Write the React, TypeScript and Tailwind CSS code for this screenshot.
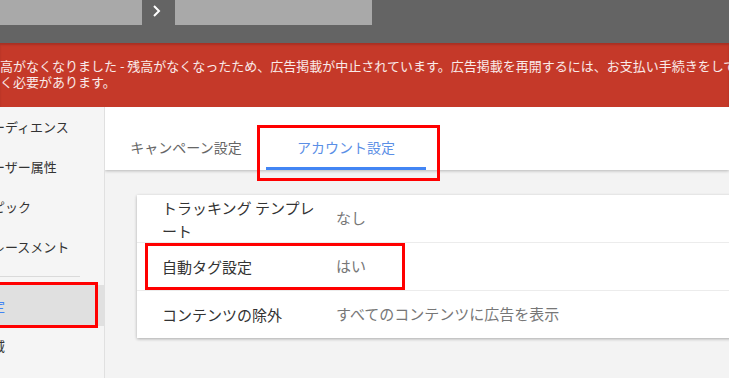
const navItems = ['オーディエンス', 'ユーザー属性', 'トピック', 'プレースメント']

const rows = [
  { label: 'トラッキング テンプレート', value: 'なし' },
  { label: '自動タグ設定', value: 'はい', marked: true },
  { label: 'コンテンツの除外', value: 'すべてのコンテンツに広告を表示' },
]

function TopBar() {
  return (
    <div className="h-[43px] bg-[#646464] flex items-start">
      <div className="w-[142px] h-[25px] bg-[#a9a9a9]" />
      <div className="w-[33px] h-[25px] pl-[10px] pt-[5px]">
        <svg width="10" height="12" viewBox="0 0 10 12" fill="none">
          <path d="M2 1l5 5-5 5" stroke="#fff" strokeWidth="2" />
        </svg>
      </div>
      <div className="w-[197px] h-[25px] bg-[#a9a9a9]" />
    </div>
  )
}

function Banner() {
  return (
    <div className="h-[64px] bg-[#c53929] shadow-[inset_0_2px_2px_rgba(0,0,0,0.15)] pt-[15px] overflow-hidden">
      <div className="ml-[-13px] text-[13px] leading-[16px] text-white/90 whitespace-nowrap">
        <div>残高がなくなりました - 残高がなくなったため、広告掲載が中止されています。広告掲載を再開するには、お支払い手続きをしていた</div>
        <div>だく必要があります。</div>
      </div>
    </div>
  )
}

function Sidebar() {
  return (
    <div className="w-[105px] shrink-0 bg-[#f5f5f5] border-r border-[#e0e0e0] text-[13px] text-[#333]">
      {navItems.map(n => (
        <div key={n} className="h-[40px] flex items-center whitespace-nowrap">
          <span className="ml-[-21px]">{n}</span>
        </div>
      ))}
      <div className="mt-[9px] h-px w-[80px] bg-[#dadada]" />
      <div className="relative mt-[8px] h-[41px] bg-[#e0e0e0] flex items-center text-[#4285f4]">
        <span className="ml-[-21px]">設定</span>
        <span className="absolute left-[-4px] right-[6px] top-[-3px] bottom-[-2px] border-[3px] border-[#ff0000]" />
      </div>
      <div className="h-[40px] flex items-center">
        <span className="ml-[-21px]">地域</span>
      </div>
    </div>
  )
}

function Tabs() {
  return (
    <div className="h-[63px] bg-white shadow-[0_1px_3px_rgba(0,0,0,0.25)] flex pl-px text-[14px]">
      <div className="w-[160px] flex justify-center pt-[30px] leading-[20px] text-[#666]">キャンペーン設定</div>
      <div className="relative w-[160px] flex flex-col items-center pt-[30px] leading-[20px] text-[#5b8fe6]">
        <span>アカウント設定</span>
        <span className="absolute left-0 right-0 bottom-0 h-[3px] bg-[#4285f4]" />
        <span className="absolute left-[-9px] right-[-14px] top-[18px] bottom-[-11px] border-[3px] border-[#ff0000]" />
      </div>
    </div>
  )
}

function SettingsCard() {
  return (
    <div className="ml-[32px] mt-[25px] w-[700px] bg-white shadow-[0_1px_3px_rgba(0,0,0,0.3)] text-[15px]">
      {rows.map((r, i) => (
        <div
          key={r.label}
          className={`relative flex items-center pl-[25px] ${i === 0 ? 'h-[47px]' : 'h-[48px] border-t border-[#ececec]'}`}
        >
          <div className="w-[160px] mr-[14px] leading-[23px] text-[#333]">{r.label}</div>
          <div className="text-[#777]">{r.value}</div>
          {r.marked && (
            <span className="absolute left-[8px] w-[260px] top-0 bottom-0 border-[3px] border-[#ff0000]" />
          )}
        </div>
      ))}
    </div>
  )
}

export default function App() {
  return (
    <div className="w-[729px] h-[378px] overflow-hidden bg-[#f3f3f3] font-['Noto_Sans_CJK_JP',sans-serif]">
      <TopBar />
      <Banner />
      <div className="flex h-[271px]">
        <Sidebar />
        <div className="flex-1 min-w-0 overflow-hidden">
          <Tabs />
          <SettingsCard />
        </div>
      </div>
    </div>
  )
}
